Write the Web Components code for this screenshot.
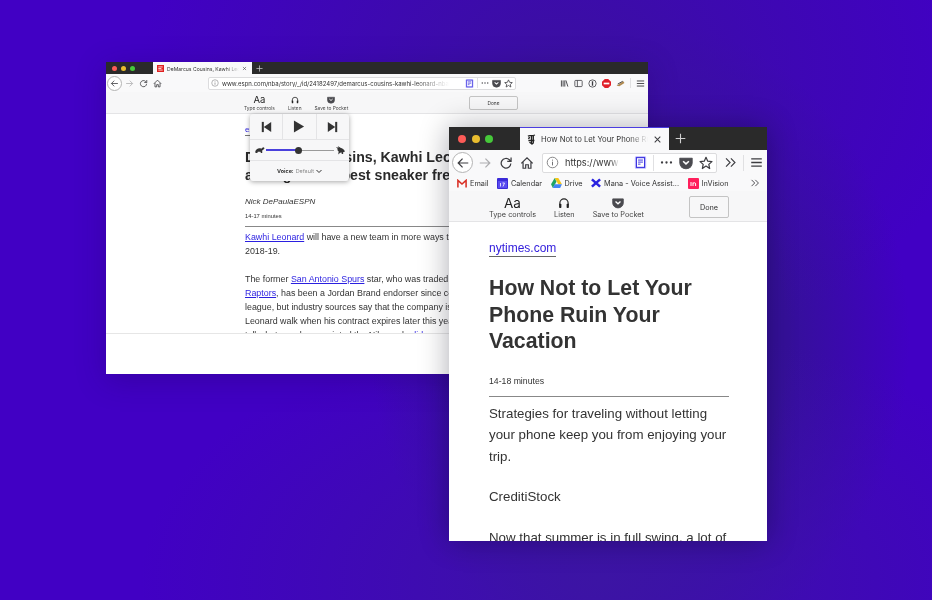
<!DOCTYPE html>
<html>
<head>
<meta charset="utf-8">
<style>
  html, body { margin: 0; height: 100%; }
  body {
    width: 932px; height: 600px; overflow: hidden; position: relative;
    font-family: "Liberation Sans", Arial, sans-serif;
    background:
      radial-gradient(420px 300px at 560px 70px, #3a10a0 0%, rgba(58,16,160,0) 100%),
      radial-gradient(460px 260px at 600px 580px, #3c14a4 0%, rgba(60,20,164,0) 100%),
      radial-gradient(270px 320px at 640px 340px, #35109a 55%, rgba(53,16,154,0) 100%),
      #4100c4;
  }
  a { color: #2a1fe0; text-decoration: underline; }
</style>
</head>
<body>
<browser-window mode="small" style="left:106px;top:62px;width:542px;height:312px">
  <listen-panel slot="overlay"></listen-panel>
  <reader-article>
    <div style="font-size:8px;line-height:11px;margin-top:10px;width:40px;color:#2a1fe0;border-bottom:1px solid #777">espn.com</div>
    <div style="font-size:14.2px;font-weight:bold;line-height:18px;margin-top:12px;white-space:nowrap;color:#2a2a2a">DeMarcus Cousins, Kawhi Leonard and<br>among NBA's best sneaker free agents</div>
    <div style="font-size:8px;font-style:italic;margin-top:13px;line-height:10px">Nick DePaulaESPN</div>
    <div style="font-size:5.8px;margin-top:5px;line-height:8px">14-17 minutes</div>
    <div style="width:360px;height:1px;background:#888;margin-top:6px"></div>
    <div style="font-size:8.9px;line-height:14px;margin-top:3px;white-space:nowrap"><a>Kawhi Leonard</a> will have a new team in more ways than one in<br>2018-19.</div>
    <div style="font-size:8.9px;line-height:14px;margin-top:14px;white-space:nowrap">The former <a>San Antonio Spurs</a> star, who was traded to the Toronto<br><a>Raptors</a>, has been a Jordan Brand endorser since coming into the<br>league, but industry sources say that the company is prepared to let<br>Leonard walk when his contract expires later this year, according to<br>tell what people associated the Nike and <a>adidas</a></div>
  </reader-article>
</browser-window>

<browser-window mode="large" style="left:449px;top:127px;width:318px;height:414px">
  <reader-article>
    <div style="font-size:12px;color:#3420dc;margin-top:18px;line-height:16px;width:67px;border-bottom:1px solid #666;white-space:nowrap">nytimes.com</div>
    <div style="font-size:21.3px;font-weight:bold;line-height:26.5px;margin-top:18px;color:#333;white-space:nowrap">How Not to Let Your<br>Phone Ruin Your<br>Vacation</div>
    <div style="font-size:8.7px;margin-top:20px;line-height:12px">14-18 minutes</div>
    <div style="height:1px;background:#888;margin-top:9px;width:240px"></div>
    <div style="font-size:13.3px;line-height:21.5px;margin-top:6px;white-space:nowrap">Strategies for traveling without letting<br>your phone keep you from enjoying your<br>trip.</div>
    <div style="font-size:13.3px;line-height:21.5px;margin-top:18.5px">CreditiStock</div>
    <div style="font-size:13.3px;line-height:21.5px;margin-top:19.5px;white-space:nowrap">Now that summer is in full swing, a lot of</div>
  </reader-article>
</browser-window>

<script>
// Iconos compartidos
const svg = (s, body, extra = '') => `<svg width="${s}" height="${s}" viewBox="0 0 16 16" fill="none" stroke="#3c3c40" stroke-width="1.4" style="flex:none" ${extra}>${body}</svg>`;
const icons = {
  back: s => svg(s, '<path d="M14 8H2.5M7.5 3L2.5 8l5 5"/>'),
  forward: s => svg(s, '<path d="M2 8h11.5M8.5 3l5 5-5 5"/>', 'opacity=".4"'),
  reload: s => svg(s, '<path d="M13.5 8.5a5.5 5.5 0 1 1-1.7-4.2L13.5 6M13.8 1.8v4.4H9.4"/>'),
  home: s => svg(s, '<path d="M1.5 8.5L8 2l6.5 6.5M3.5 7v7h3v-4h3v4h3V7"/>'),
  info: s => svg(s, '<circle cx="8" cy="8" r="6.5" stroke-width="1"/><path d="M8 7v4.5M8 4.5v1.2" stroke-width="1.2"/>', 'opacity=".75"'),
  reader: s => `<svg width="${s}" height="${s}" viewBox="0 0 16 16"><rect x="1" y="0" width="14" height="16" rx="2" fill="#c9c6ff"/><rect x="3" y="2" width="10" height="12" fill="#fff" stroke="#3d35e0" stroke-width="1.4"/><path d="M5 5h6M5 7.5h6M5 10h3" stroke="#3d35e0" stroke-width="1.2"/></svg>`,
  dots: s => `<svg width="${s}" height="${s}" viewBox="0 0 16 16" fill="#3c3c40"><circle cx="2.5" cy="8" r="1.4"/><circle cx="8" cy="8" r="1.4"/><circle cx="13.5" cy="8" r="1.4"/></svg>`,
  pocket: s => `<svg width="${s}" height="${s}" viewBox="0 0 16 16"><path d="M1 2.5h14v5.5a7 6.5 0 0 1-14 0z" fill="#4a4a4f" stroke="#4a4a4f" stroke-linejoin="round" stroke-width="1.2"/><path d="M4.7 6L8 9l3.3-3" stroke="#fff" stroke-width="1.8" fill="none"/></svg>`,
  star: s => svg(s, '<path d="M8 1.5l2 4.4 4.8.5-3.6 3.2 1 4.7L8 11.5l-4.2 2.8 1-4.7L1.2 6.4 6 5.9z" stroke-linejoin="round"/>'),
  chev: s => svg(s, '<path d="M2.5 3l5 5-5 5M8.5 3l5 5-5 5"/>'),
  menu: s => svg(s, '<path d="M1.5 3.5h13M1.5 8h13M1.5 12.5h13" stroke-width="1.6"/>'),
  close: s => svg(s, '<path d="M3 3l10 10M13 3L3 13" stroke-width="1.8"/>'),
  plus: s => svg(s, '<path d="M8 1v14M1 8h14" stroke="#d0d0d0" stroke-width="1.6"/>'),
  headphones: s => `<svg width="${s}" height="${s}" viewBox="0 0 16 16"><path d="M2.5 11V8a5.5 5.5 0 0 1 11 0v3" fill="none" stroke="#222" stroke-width="1.5"/><rect x="1.5" y="9" width="3" height="5.5" rx="1" fill="#222"/><rect x="11.5" y="9" width="3" height="5.5" rx="1" fill="#222"/></svg>`,
  library: s => svg(s, '<path d="M2.5 2.5v11M5.5 2.5v11M8.5 2.5v11M10.5 2.5l3.5 11" stroke-width="1.6"/>'),
  sidebar: s => svg(s, '<rect x="1.5" y="2.5" width="13" height="11" rx="1.5"/><path d="M6 2.5v11"/>'),
  onepass: s => svg(s, '<circle cx="8" cy="8" r="6.5"/><path d="M8 4v8" stroke-width="2.4"/>'),
  adblock: s => `<svg width="${s}" height="${s}" viewBox="0 0 16 16"><polygon points="5,0 11,0 16,5 16,11 11,16 5,16 0,11 0,5" fill="#e0202a"/><rect x="3" y="6.5" width="10" height="3" fill="#fff"/></svg>`,
  ext: s => `<svg width="${s}" height="${s}" viewBox="0 0 16 16"><path d="M1 12L13 4l2 3-9 6z" fill="#b08a50"/><path d="M3 9l9-5" stroke="#222" stroke-width="1.4"/></svg>`,
  espn: () => '<svg width="7" height="7" viewBox="0 0 8 8" style="flex:none"><rect width="8" height="8" fill="#e02020"/><path d="M1.5 2.2h5M1.5 4h3.5M1.5 5.8h5" stroke="#fff" stroke-width=".9"/></svg>',
  nyt: () => '<svg width="9" height="11" viewBox="0 0 9 11" style="flex:none"><path d="M1 2.2C2.5 .8 4 2.6 8 1M4.5 2v7.6L2.4 8.3M6.3 2v7l-1.8 1.4M1.2 4.6L3 3.4M1.4 6.5h6" fill="none" stroke="#222" stroke-width="1.3"/></svg>',
  gmail: () => '<svg width="10" height="9" viewBox="0 0 11 9"><path d="M1 9V1l4.5 4L10 1v8" fill="none" stroke="#d93025" stroke-width="1.7"/></svg>',
  cal: () => '<svg width="11" height="11" viewBox="0 0 11 11"><rect width="11" height="11" rx="1" fill="#3b2bd8"/><rect x="1" y="3" width="9" height="7" fill="#5a4cf0"/><path d="M3.5 5v3.5M5.5 5h2L6 8.5" stroke="#fff" stroke-width=".8" fill="none"/></svg>',
  drive: () => '<svg width="11" height="10" viewBox="0 0 12 11"><path d="M4 0h4l4 7H8z" fill="#f5c518"/><path d="M4 0L0 7l2 4 4-7z" fill="#1fa463"/><path d="M2 11h8l2-4H4z" fill="#4285f4"/></svg>',
  mana: () => '<svg width="10" height="10" viewBox="0 0 11 11" stroke="#2a22e0" stroke-width="2.8" fill="none"><path d="M1 1.5l9 8M10 1.5l-9 8"/></svg>',
  inv: () => '<svg width="11" height="11" viewBox="0 0 11 11"><rect width="11" height="11" rx="1" fill="#ff1f5c"/><path d="M3 4v4M5 8V4.5M5 5.5c1-1.2 2.6-1 2.6.5v2" stroke="#fff" fill="none"/></svg>'
};

// Medidas de cada modo de ventana
const sizes = {
  small: { tabs: 12, lightsW: 47, lightsPad: 6, dot: 5, dotGap: 4, tabW: 99, tabPad: 4, tabGap: 3, tabFont: 5.1, plusPad: 4, plus: 7, close: 5,
           bar: 18, tools: 4.8, labelH: 6, aa: 9.5, toolIcon: 8, toolsPad: 138, toolsTop: 2, toolsGap: 13, readerH: 21, doneW: 49, doneH: 14, doneRight: 130, doneTop: 0, artPad: 139, artH: 219 },
  large: { tabs: 23, lightsW: 71, lightsPad: 9, dot: 8, dotGap: 5.5, tabW: 149, tabPad: 7, tabGap: 5, tabFont: 7.7, plusPad: 6, plus: 11, close: 9,
           bar: 25, tools: 7.3, labelH: 10, aa: 13.5, toolIcon: 12, toolsPad: 40, toolsTop: 4, toolsGap: 18, readerH: 30, doneW: 40, doneH: 22, doneRight: 38, doneTop: 2, artPad: 40, artH: 320 }
};

// Ventana del navegador con modo lector
class BrowserWindow extends HTMLElement {
  constructor() {
    super();
    this.attachShadow({ mode: 'open' });
  }
  connectedCallback() {
    const mode = this.getAttribute('mode');
    const small = mode === 'small';
    const m = sizes[mode];
    const toolbar = small ? `
      <span class="circle">${icons.back(9)}</span>
      <span class="row" style="gap:5px;margin-left:3px">${icons.forward(9)}${icons.reload(9)}${icons.home(9)}</span>
      <span class="url" style="width:308px;margin-left:46px">${icons.info(8)}<span class="addr">www.espn.com/nba/story/_/id/24182497/demarcus-cousins-kawhi-leonard-nba</span><span class="sp"></span>${icons.reader(9)}<i></i>${icons.dots(8)}${icons.pocket(9)}${icons.star(9)}</span>
      <span class="row" style="gap:5px;margin-left:auto">${icons.library(9)}${icons.sidebar(9)}${icons.onepass(9)}${icons.adblock(9)}${icons.ext(9)}<i></i>${icons.menu(9)}</span>
    ` : `
      <span class="circle">${icons.back(14)}</span>
      <span class="row" style="gap:7px;margin-left:5px">${icons.forward(14)}${icons.reload(14)}${icons.home(14)}</span>
      <span class="url" style="width:175px;margin-left:8px">${icons.info(13)}<span class="addr">https://www</span><span class="sp"></span>${icons.reader(13)}<i></i>${icons.dots(13)}${icons.pocket(14)}${icons.star(14)}</span>
      <span class="row" style="gap:6px;margin-left:auto">${icons.chev(13)}<i></i>${icons.menu(13)}</span>
    `;
    this.shadowRoot.innerHTML = `
      <style>
        :host { position: absolute; display: flex; flex-direction: column; background: #fff; color: #333;
                font-family: Inter, "Liberation Sans", sans-serif;
                box-shadow: ${small ? '0 6px 28px rgba(30,0,90,.3)' : '0 0 28px rgba(0,0,20,.33)'};
                filter: blur(${small ? .35 : .2}px); }
        .tabs { display: flex; background: #2a2a2a; height: ${m.tabs}px; flex: none; }
        .lights { display: flex; align-items: center; gap: ${m.dotGap}px; padding-left: ${m.lightsPad}px; width: ${m.lightsW}px; box-sizing: border-box; flex: none; }
        .lights b { width: ${m.dot}px; height: ${m.dot}px; border-radius: 50%; }
        .tab { background: #f9f9fa; display: flex; align-items: center; gap: ${m.tabGap}px; width: ${m.tabW}px; padding: 0 ${small ? 5 : 7}px 0 ${m.tabPad}px; box-sizing: border-box;
               border-top: 1px solid ${small ? '#f9f9fa' : '#4a3de0'}; font-size: ${m.tabFont}px; white-space: nowrap; }
        .tab .t { flex: 1; min-width: 0; -webkit-mask-image: linear-gradient(90deg, #000 82%, transparent 100%); }
        .tab svg:last-child { flex: none; }
        .plus { display: flex; align-items: center; padding-left: ${m.plusPad}px; }
        .bar { display: flex; align-items: center; background: #f9f9fa; height: ${m.bar}px; flex: none; padding: 0 ${small ? 3 : 4}px 0 ${small ? 1 : 3}px; }
        .row { display: flex; align-items: center; }
        .circle { display: inline-flex; width: ${small ? 15 : 21}px; height: ${small ? 15 : 21}px; border-radius: 50%; border: 1px solid #b4b4b4; background: #fff; align-items: center; justify-content: center; box-sizing: border-box; flex: none; }
        .url { display: flex; align-items: center; gap: ${small ? 3 : 6}px; height: ${small ? 13 : 20}px; background: #fff; border: 1px solid #dcdcde; border-radius: 2px; padding: 0 ${small ? 2 : 3}px; box-sizing: border-box; flex: none; }
        .url .addr { font-size: ${small ? 6 : 9.2}px; white-space: nowrap; -webkit-mask-image: linear-gradient(90deg, #000 85%, transparent 100%); }
        .sp { flex: 1; }
        i { display: block; width: 1px; height: ${small ? 10 : 16}px; background: #e0e0e2; }
        .bookmarks { display: flex; align-items: center; height: 16px; background: #f9f9fa; padding: 0 7px 0 8px; gap: 8.5px; font-size: 7.3px; white-space: nowrap; flex: none; }
        .bookmarks span { display: inline-flex; gap: 3px; align-items: center; }
        .bookmarks > svg { margin-left: auto; }
        .reader { display: flex; align-items: center; background: #f7f7f8; border-bottom: 1px solid #e4e4e6; height: ${m.readerH}px; flex: none; }
        .tools { display: flex; gap: ${m.toolsGap}px; padding: ${m.toolsTop}px 0 0 ${m.toolsPad}px; font-size: ${m.tools}px; line-height: ${m.labelH}px; color: #444; white-space: nowrap; }
        .tools div { display: flex; flex-direction: column; align-items: center; gap: 1px; }
        .tools .aa { font-size: ${m.aa}px; line-height: ${m.toolIcon}px; color: #222; }
        .done { margin: ${m.doneTop}px ${m.doneRight}px 0 auto; width: ${m.doneW}px; height: ${m.doneH}px; border: 1px solid #c4c4c4; background: #f7f7f8; border-radius: 2px; font-size: ${m.tools}px; display: flex; align-items: center; justify-content: center; box-sizing: border-box; }
        .page { flex: 1; display: flex; flex-direction: column; overflow: hidden; background: #fff; }
        .article { height: ${m.artH}px; padding-left: ${m.artPad}px; overflow: hidden; flex: none; }
        .foot { flex: 1; border-top: 1px solid #e6e6e6; background: #fff; }
      </style>
      <div class="tabs">
        <div class="lights"><b style="background:#fc5b57"></b><b style="background:#e9bd2f"></b><b style="background:#46c83a"></b></div>
        <div class="tab">${small ? icons.espn() : icons.nyt()}<span class="t">${small ? 'DeMarcus Cousins, Kawhi Leon' : 'How Not to Let Your Phone Rui'}</span>${icons.close(m.close)}</div>
        <span class="plus">${icons.plus(m.plus)}</span>
      </div>
      <div class="bar">${toolbar}</div>
      ${small ? '' : `<div class="bookmarks">
        <span>${icons.gmail()}Email</span><span>${icons.cal()}Calendar</span><span>${icons.drive()}Drive</span><span>${icons.mana()}Mana - Voice Assist...</span><span>${icons.inv()}InVision</span>
        ${icons.chev(10)}
      </div>`}
      <div class="reader">
        <div class="tools">
          <div><span class="aa">Aa</span>Type controls</div>
          <div>${icons.headphones(m.toolIcon)}Listen</div>
          <div>${icons.pocket(m.toolIcon)}Save to Pocket</div>
        </div>
        <div class="done">Done</div>
      </div>
      <div class="page">
        <div class="article"><slot></slot></div>
        ${small ? '<div class="foot"></div>' : ''}
      </div>
      <slot name="overlay"></slot>
    `;
  }
}
customElements.define('browser-window', BrowserWindow);

// Panel flotante de "Listen"
class ListenPanel extends HTMLElement {
  constructor() {
    super();
    this.attachShadow({ mode: 'open' });
    this.shadowRoot.innerHTML = `
      <style>
        :host { position: absolute; left: 144px; top: 52px; width: 99px; background: #f7f7f8; border-radius: 3px; box-shadow: 0 1px 5px rgba(0,0,0,.35); display: block; color: #333; z-index: 3; font-family: Inter, "Liberation Sans", sans-serif; }
        .btns { display: flex; height: 25px; border-bottom: 1px solid #e4e4e6; }
        .btns div { flex: 1; display: flex; align-items: center; justify-content: center; border-left: 1px solid #e4e4e6; }
        .btns div:first-child { border-left: 0; }
        .speed { display: flex; align-items: center; height: 20px; padding: 0 4px 0 5px; gap: 1px; border-bottom: 1px solid #e4e4e6; }
        .track { flex: 1; height: 1px; background: #9a9a9a; position: relative; }
        .track::before { content: ""; position: absolute; left: 0; top: -.5px; height: 2px; width: 45%; background: #4a40dc; }
        .track::after { content: ""; position: absolute; left: 42%; top: -3px; width: 7px; height: 7px; border-radius: 50%; background: #333; }
        .voice { height: 20px; display: flex; align-items: center; justify-content: center; font-size: 5.4px; gap: 2px; font-weight: bold; }
        .voice em { font-style: normal; font-weight: normal; color: #8a8a8a; }
      </style>
      <div class="btns">
        <div><svg width="11" height="12" viewBox="0 0 14 13" fill="#333"><rect x="1" y="0" width="2.6" height="13"/><path d="M13 0v13L3.5 6.5z"/></svg></div>
        <div><svg width="12" height="13" viewBox="0 0 13 13" fill="#333"><path d="M1 0l11 6.5L1 13z"/></svg></div>
        <div><svg width="11" height="12" viewBox="0 0 14 13" fill="#333"><rect x="10.4" y="0" width="2.6" height="13"/><path d="M1 0v13l9.5-6.5z"/></svg></div>
      </div>
      <div class="speed">
        <svg width="10" height="8" viewBox="0 0 11 9" fill="#333" style="flex:none"><path d="M0 7C1 3 4 2 7 3L8 2l2-.5.5 1.5L8 5v3H6.5L6 6.5H3L2.5 8H1z"/></svg>
        <div class="track"></div>
        <svg width="10" height="9" viewBox="0 0 11 10" fill="#333" style="flex:none"><path d="M1 1l3 1-1-2 3 2c2 .5 4 2 5 4L9 7v2H7.5L7 7 5 8 3.5 9.5 4 6 2 4h1.5z"/></svg>
      </div>
      <div class="voice"><span>Voice:</span><em>Default</em><svg width="6" height="5" viewBox="0 0 6 5" fill="none" stroke="#333" stroke-width="1"><path d="M.5 1L3 3.5 5.5 1"/></svg></div>
    `;
  }
}
customElements.define('listen-panel', ListenPanel);

// Articulo en modo lector
class ReaderArticle extends HTMLElement {
  constructor() {
    super();
    this.attachShadow({ mode: 'open' });
    this.shadowRoot.innerHTML = `
      <style>
        :host { display: block; font-family: "Liberation Sans", Arial, sans-serif; color: #333; }
      </style>
      <slot></slot>
    `;
  }
}
customElements.define('reader-article', ReaderArticle);
</script>
</body>
</html>
